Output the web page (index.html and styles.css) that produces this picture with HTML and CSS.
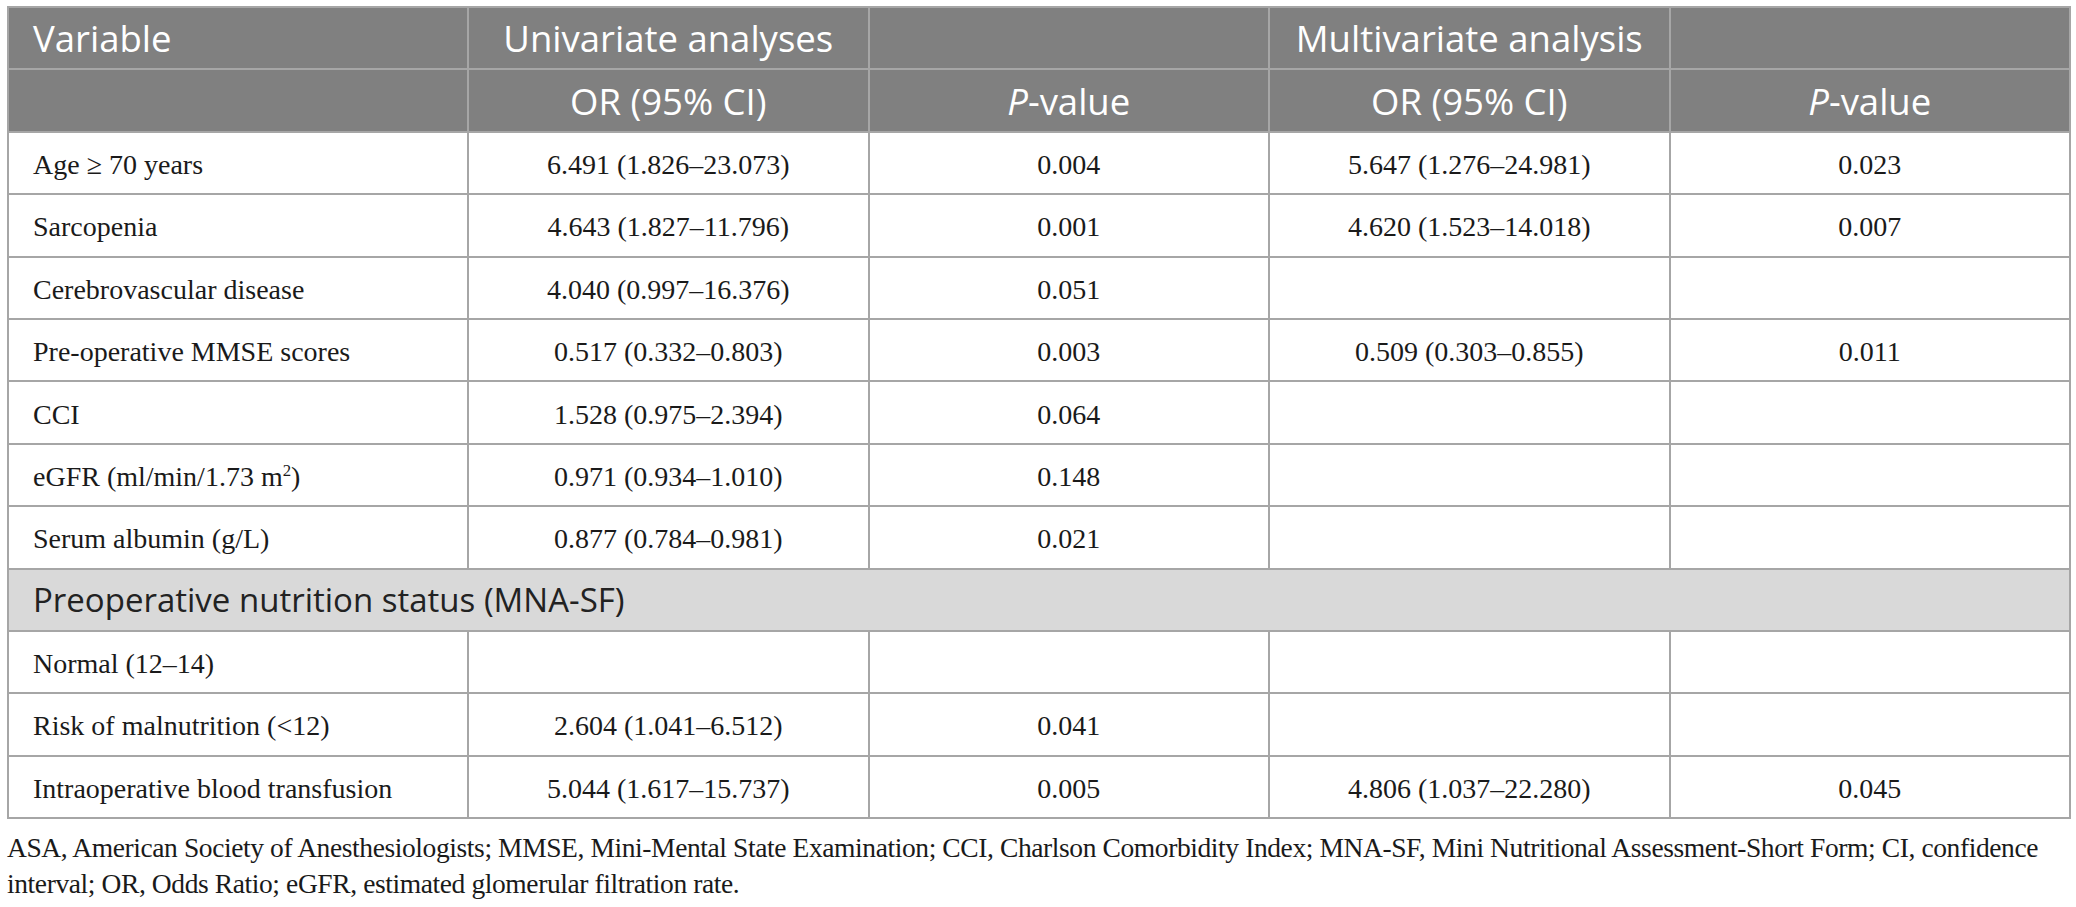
FILE: index.html
```html
<!DOCTYPE html>
<html lang="en">
<head>
  <meta charset="UTF-8" />
  <title>Logistic regression table</title>
  <link rel="stylesheet" href="styles.css">
</head>
<body>
  <!-- results table -->
  <table class="results">
    <colgroup>
      <col class="col-var">
      <col class="col-val">
      <col class="col-val">
      <col class="col-val">
      <col class="col-val">
    </colgroup>
    <thead>
      <tr>
        <th class="left">Variable</th>
        <th>Univariate analyses</th>
        <th></th>
        <th>Multivariate analysis</th>
        <th></th>
      </tr>
      <tr>
        <th></th>
        <th>OR (95% CI)</th>
        <th><i>P</i>-value</th>
        <th>OR (95% CI)</th>
        <th><i>P</i>-value</th>
      </tr>
    </thead>
    <tbody>
      <tr>
        <td>Age &ge; 70 years</td>
        <td>6.491 (1.826&ndash;23.073)</td>
        <td>0.004</td>
        <td>5.647 (1.276&ndash;24.981)</td>
        <td>0.023</td>
      </tr>
      <tr>
        <td>Sarcopenia</td>
        <td>4.643 (1.827&ndash;11.796)</td>
        <td>0.001</td>
        <td>4.620 (1.523&ndash;14.018)</td>
        <td>0.007</td>
      </tr>
      <tr>
        <td>Cerebrovascular disease</td>
        <td>4.040 (0.997&ndash;16.376)</td>
        <td>0.051</td>
        <td></td>
        <td></td>
      </tr>
      <tr>
        <td>Pre-operative MMSE scores</td>
        <td>0.517 (0.332&ndash;0.803)</td>
        <td>0.003</td>
        <td>0.509 (0.303&ndash;0.855)</td>
        <td>0.011</td>
      </tr>
      <tr>
        <td>CCI</td>
        <td>1.528 (0.975&ndash;2.394)</td>
        <td>0.064</td>
        <td></td>
        <td></td>
      </tr>
      <tr>
        <td>eGFR (ml/min/1.73 m<sup>2</sup>)</td>
        <td>0.971 (0.934&ndash;1.010)</td>
        <td>0.148</td>
        <td></td>
        <td></td>
      </tr>
      <tr>
        <td>Serum albumin (g/L)</td>
        <td>0.877 (0.784&ndash;0.981)</td>
        <td>0.021</td>
        <td></td>
        <td></td>
      </tr>
      <tr class="section">
        <td colspan="5">Preoperative nutrition status (MNA-SF)</td>
      </tr>
      <tr>
        <td>Normal (12&ndash;14)</td>
        <td></td>
        <td></td>
        <td></td>
        <td></td>
      </tr>
      <tr>
        <td>Risk of malnutrition (&lt;12)</td>
        <td>2.604 (1.041&ndash;6.512)</td>
        <td>0.041</td>
        <td></td>
        <td></td>
      </tr>
      <tr>
        <td>Intraoperative blood transfusion</td>
        <td>5.044 (1.617&ndash;15.737)</td>
        <td>0.005</td>
        <td>4.806 (1.037&ndash;22.280)</td>
        <td>0.045</td>
      </tr>
    </tbody>
  </table>

  <!-- abbreviations under the table -->
  <p class="footnote">ASA, American Society of Anesthesiologists; MMSE, Mini-Mental State Examination; CCI, Charlson Comorbidity Index; MNA-SF, Mini Nutritional Assessment-Short Form; CI, confidence interval; OR, Odds Ratio; eGFR, estimated glomerular filtration rate.</p>
</body>
</html>
```

FILE: styles.css
```css
/* page basics */
body {
  margin: 0;
  padding: 6px 7px 0;
  background-color: #ffffff;
  color: #1a1a1a;
  font-family: "Liberation Serif", "Times New Roman", serif;
}

/* the table itself */
.results {
  width: 2062px;
  border-collapse: collapse;
  table-layout: fixed;
}

.col-var {
  width: 460px;
}

.col-val {
  width: 400.5px;
}

.results tr {
  height: 62.4px;
}

.results th,
.results td {
  border: 2px solid #a6a6a6;
  padding: 0 24px;
}

/* grey header rows */
.results th {
  background-color: #808080;
  color: #ffffff;
  font-family: "Open Sans", "Noto Sans", sans-serif;
  font-weight: normal;
  font-size: 36.5px;
  text-align: center;
}

.results th.left {
  text-align: left;
}

/* body cells */
.results td {
  font-size: 28px;
  text-align: center;
  padding-top: 4px;
}

.results td:first-child {
  text-align: left;
}

.results sup {
  font-size: 0.6em;
  line-height: 0;
}

/* light grey section row */
.results .section td {
  background-color: #d9d9d9;
  font-family: "Open Sans", "Noto Sans", sans-serif;
  font-size: 33px;
  color: #222222;
  padding-top: 0;
}

/* footnote text */
.footnote {
  margin: 11px 0 0;
  font-size: 27.5px;
  letter-spacing: -0.4px;
  line-height: 36px;
  color: #1a1a1a;
}
```
